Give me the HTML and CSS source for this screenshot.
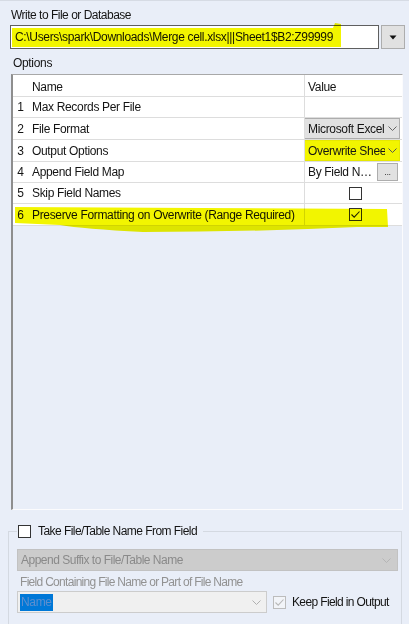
FILE: index.html
```html
<!DOCTYPE html>
<html>
<head>
<meta charset="utf-8">
<link rel="stylesheet" href="styles.css">
</head>
<body>
<div class="label write-label">Write to File or Database</div>
<div class="path-row">
  <div class="path-input">C:\Users\spark\Downloads\Merge cell.xlsx|||Sheet1$B2:Z99999</div>
  <div class="drop-btn"><svg width="8" height="5" viewBox="0 0 8 5"><path d="M0.5 0.5 H7.5 L4 4.5 Z" fill="#111"/></svg></div>
</div>
<div class="label options-label">Options</div>
<div class="grid-box">
  <div class="row hdr"><div class="num"></div><div class="name">Name</div><div class="val"><span class="pad">Value</span></div></div>
  <div class="row r21"><div class="num">1</div><div class="name">Max Records Per File</div><div class="val"></div></div>
  <div class="row"><div class="num">2</div><div class="name">File Format</div><div class="val"><div class="combo"><span class="ctext">Microsoft Excel</span><svg class="chev" width="9" height="5" viewBox="0 0 9 5"><path d="M0.5 0.5 L4.5 4.5 L8.5 0.5" fill="none" stroke="#666" stroke-width="1"/></svg></div></div></div>
  <div class="row"><div class="num">3</div><div class="name">Output Options</div><div class="val"><div class="combo hl"><span class="ctext">Overwrite Sheet</span><svg class="chev" width="9" height="5" viewBox="0 0 9 5"><path d="M0.5 0.5 L4.5 4.5 L8.5 0.5" fill="none" stroke="#555" stroke-width="1"/></svg></div></div></div>
  <div class="row r21"><div class="num">4</div><div class="name">Append Field Map</div><div class="val map"><span class="maptext">By Field Name</span><span class="dots">...</span></div></div>
  <div class="row r21"><div class="num">5</div><div class="name">Skip Field Names</div><div class="val center"><span class="cb"></span></div></div>
  <div class="row"><div class="num">6</div><div class="name">Preserve Formatting on Overwrite (Range Required)</div><div class="val center"><span class="cb"><svg width="11" height="11" viewBox="0 0 11 11"><path d="M1.5 5.5 L4.2 8.2 L9.5 2.5" fill="none" stroke="#222" stroke-width="1.1"/></svg></span></div></div>
</div>
<fieldset class="group">
  <legend class="legend"><span class="cb"></span><span>Take File/Table Name From Field</span></legend>
  <div class="suffix"><span>Append Suffix to File/Table Name</span><svg class="chev" width="9" height="5" viewBox="0 0 9 5"><path d="M0.5 0.5 L4.5 4.5 L8.5 0.5" fill="none" stroke="#b5b5b5" stroke-width="1"/></svg></div>
  <div class="field-label">Field Containing File Name or Part of File Name</div>
  <div class="field-row">
    <div class="field-combo"><span class="sel">Name</span><span class="farrow"><svg width="9" height="5" viewBox="0 0 9 5"><path d="M0.5 0.5 L4.5 4.5 L8.5 0.5" fill="none" stroke="#b0b0b0" stroke-width="1"/></svg></span></div>
    <span class="cb dis"><svg width="11" height="11" viewBox="0 0 11 11"><path d="M1.5 5.5 L4.2 8.2 L9.5 2.5" fill="none" stroke="#b8b8b8" stroke-width="1.1"/></svg></span>
    <span class="keep">Keep Field in Output</span>
  </div>
</fieldset>
<svg class="marks" width="409" height="624" viewBox="0 0 409 624">
  <path d="M12 27 L333 27 L335 22 L341 23 L341 46 L12 46 Z" fill="#f2f500"/>
  <path d="M15 206 L200 207 L387 208 L388 226 L357 226 Q250 231 143 231 Q83 228 60 224 L15 222 Z" fill="#f2f500"/>
</svg>
</body>
</html>
```
FILE: styles.css
```css
* { box-sizing: border-box; }
html, body { margin: 0; padding: 0; }
body {
  width: 409px;
  height: 624px;
  overflow: hidden;
  position: relative;
  background: #e9eef8;
  border-top: 1px solid #d6dbe4;
  font-family: "Liberation Sans", Arial, sans-serif;
  font-size: 12px;
  letter-spacing: -0.33px;
  color: #141414;
}
.label { height: 14px; line-height: 14px; }
.write-label { margin: 7px 0 0 11px; letter-spacing: -0.5px; }
.path-row {
  display: flex;
  gap: 2px;
  height: 24px;
  margin: 3px 4px 0 10px;
}
.path-input {
  flex: 1;
  background: #fff;
  border: 1px solid #5f5f5f;
  padding-left: 4px;
  line-height: 22px;
  white-space: nowrap;
  overflow: hidden;
}
.drop-btn {
  width: 24px;
  background: #e1e1e1;
  border: 1px solid #adadad;
  display: flex;
  align-items: center;
  justify-content: center;
}
.options-label { margin: 7px 0 0 13px; }
.grid-box {
  margin: 4px 0 0 11px;
  width: 392px;
  height: 436px;
  border-top: 1px solid #a8a8a8;
  border-left: 2px solid #8e8e8e;
  border-right: 1px solid #fbfbfd;
  border-bottom: 1px solid #fbfbfd;
}
.row {
  display: grid;
  grid-template-columns: 15px 276px 97px;
  height: 22px;
  background: #fff;
  border-bottom: 1px solid #dddddd;
}
.row.r21 { height: 21px; }
.num, .name, .val { display: flex; align-items: center; white-space: nowrap; }
.num { justify-content: center; }
.name { padding-left: 4px; }
.val { border-left: 1px solid #dddddd; position: relative; overflow: hidden; }
.hdr .val { align-items: flex-start; }
.hdr .name { align-items: flex-start; }
.hdr .name, .hdr .pad { padding-top: 5px; }
.pad { padding-left: 3px; }
.combo {
  width: 100%;
  height: 100%;
  margin-left: -1px;
  background: #e1e1e1;
  border: 1px solid #adadad;
  display: flex;
  align-items: center;
  padding: 0 2px 0 3px;
}
.combo.hl {
  background: #f2f500;
  border-color: #e6e800;
}
.ctext { flex: 1; overflow: hidden; white-space: nowrap; }
.chev { flex: none; margin-left: 3px; }
.map { padding-left: 3px; gap: 3px; }
.maptext { width: 66px; overflow: hidden; text-overflow: ellipsis; white-space: nowrap; }
.dots {
  width: 21px;
  height: 18px;
  background: #e1e1e1;
  border: 1px solid #adadad;
  font-size: 9px;
  line-height: 16px;
  text-align: center;
  color: #333;
}
.center { justify-content: center; }
.cb {
  display: inline-flex;
  align-items: center;
  justify-content: center;
  width: 13px;
  height: 13px;
  flex: none;
  background: #fff;
  border: 1px solid #333;
}
.center .cb { margin-left: 5px; }
.group {
  margin: 14px 7px 0 8px;
  padding: 0 3px 30px 8px;
  min-width: 0;
  border: 1px solid #d4d9e1;
}
.legend {
  display: flex;
  align-items: center;
  gap: 7px;
  height: 14px;
  padding: 0 6px 0 1px;
  letter-spacing: -0.55px;
}
.suffix {
  margin-top: 11px;
  height: 22px;
  background: #cccccc;
  border: 1px solid #c2c2c2;
  color: #8a8a8a;
  display: flex;
  align-items: center;
  justify-content: space-between;
  padding: 0 6px 0 3px;
  letter-spacing: -0.5px;
}
.field-label {
  margin: 4px 0 0 3px;
  height: 14px;
  line-height: 14px;
  color: #929292;
  letter-spacing: -0.7px;
}
.field-row {
  margin-top: 2px;
  display: flex;
  align-items: center;
  height: 22px;
}
.field-combo {
  width: 250px;
  height: 22px;
  background: #f0f0f0;
  border: 1px solid #cccccc;
  display: flex;
  align-items: center;
  padding-left: 2px;
}
.sel {
  background: #0078d7;
  color: #5d8fcf;
  height: 17px;
  line-height: 17px;
  padding: 0 1px;
}
.farrow {
  margin-left: auto;
  width: 20px;
  height: 100%;
  display: flex;
  align-items: center;
  justify-content: center;
}
.cb.dis { margin-left: 6px; border-color: #bcbcbc; background: #f2f4f8; }
.keep { margin-left: 6px; letter-spacing: -0.63px; }
.marks {
  position: absolute;
  left: 0;
  top: 0;
  pointer-events: none;
  mix-blend-mode: multiply;
}
```
